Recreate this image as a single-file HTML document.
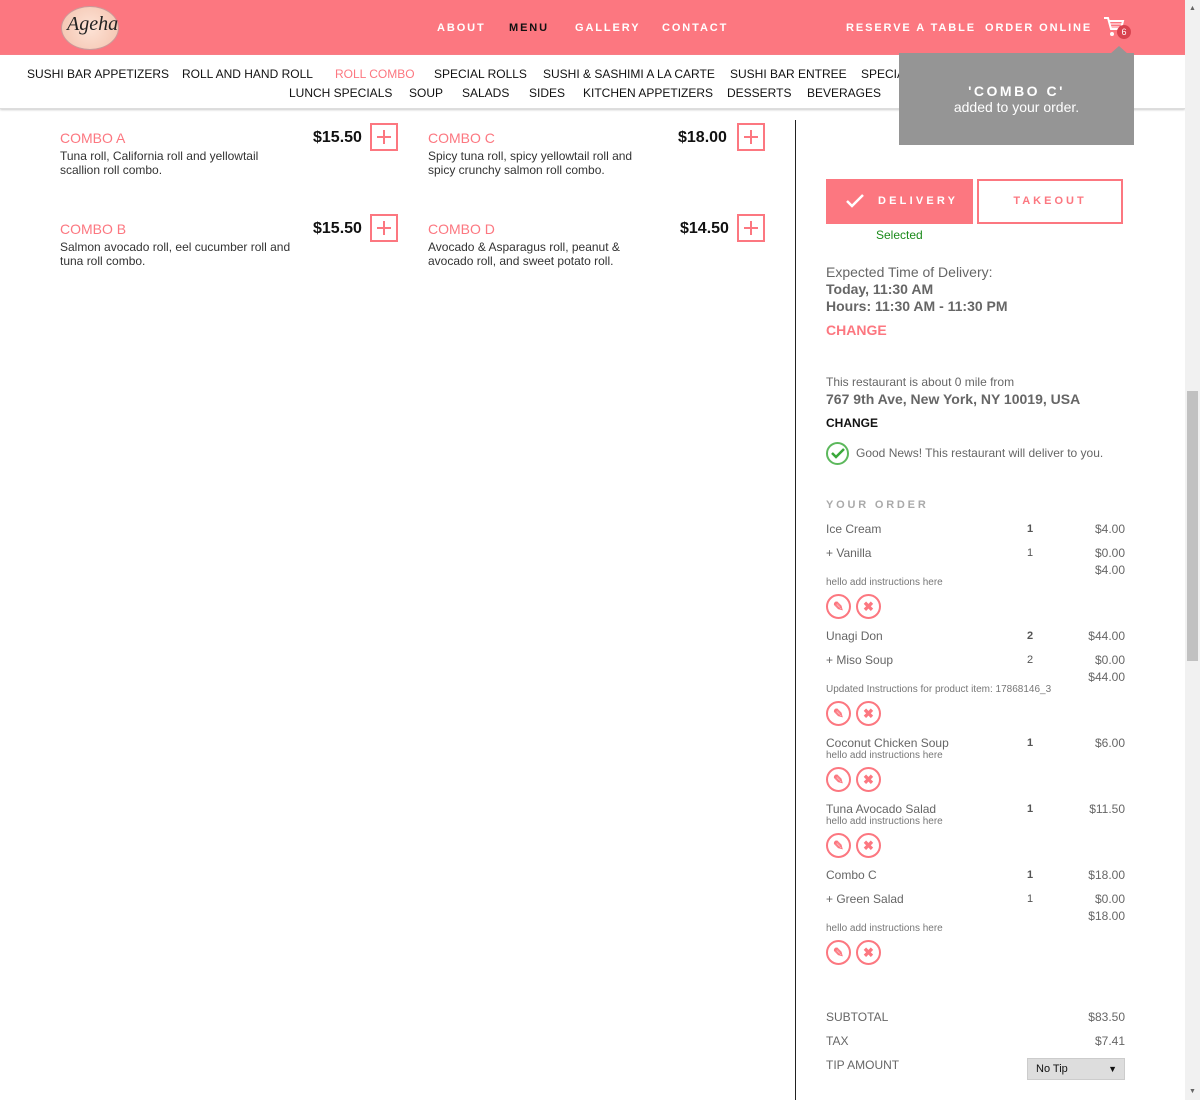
<!DOCTYPE html>
<html><head><meta charset="utf-8"><style>
*{margin:0;padding:0;box-sizing:border-box}
body{width:1200px;height:1100px;overflow:hidden;background:#fff;font-family:"Liberation Sans",sans-serif;position:relative;color:#222}
.a{position:absolute;white-space:nowrap}
.hdr{position:absolute;left:0;top:0;width:1185px;height:55px;background:#fc7780}
.nav{font-size:11px;letter-spacing:1.9px;color:#fff;font-weight:bold;top:22px}
.cat{font-size:12px;color:#111}
.pk{color:#fc7780}
.nm{font-size:14px;color:#fc7780}
.ds{font-size:12px;color:#333;line-height:14px;white-space:normal}
.pr{font-size:16px;font-weight:bold;color:#111}
.plus{position:absolute;width:28px;height:28px;border:2px solid #fc7780}
.plus:before{content:"";position:absolute;left:5px;top:11px;width:14px;height:2px;background:#fc7780}
.plus:after{content:"";position:absolute;left:11px;top:5px;width:2px;height:14px;background:#fc7780}
.g{color:#666}
.oi{font-size:12px;color:#666}
.q{font-size:11px;color:#555}
.ins{font-size:10px;color:#777}
.btn{position:absolute;width:25px;height:25px;border:2px solid #fc7780;border-radius:50%;color:#fc7780;font-size:13px;font-weight:bold;text-align:center;line-height:21px}
</style></head><body>
<div class="hdr"></div>
<div class="a" style="left:61px;top:6px;width:58px;height:44px;border-radius:50%;background:radial-gradient(circle,#fde3d6,#f3c2ad);border:1px solid #c99"></div>
<div class="a" style="left:67px;top:13px;font-family:'Liberation Serif',serif;font-style:italic;font-size:20px;color:#222">Ageha</div>
<div class="a nav" style="left:437px">ABOUT</div>
<div class="a nav" style="left:509px;color:#111">MENU</div>
<div class="a nav" style="left:575px">GALLERY</div>
<div class="a nav" style="left:662px">CONTACT</div>
<div class="a nav" style="left:846px">RESERVE A TABLE</div>
<div class="a nav" style="left:985px">ORDER ONLINE</div>
<svg class="a" style="left:1103px;top:16px" width="22" height="22" viewBox="0 0 22 22"><path d="M1 2h4l3 11h10l2-8H6" fill="none" stroke="#fff" stroke-width="2"/><path d="M7 8h12M8 11h10" stroke="#fff"/><circle cx="9" cy="18" r="2" fill="#fff"/><circle cx="17" cy="18" r="2" fill="#fff"/></svg>
<div class="a" style="left:1117px;top:25px;width:14px;height:14px;border-radius:50%;background:#d9434f;color:#fff;font-size:9px;text-align:center;line-height:14px">6</div>
<div class="a" style="left:0;top:55px;width:1185px;height:54px;border-bottom:1px solid #ddd;box-shadow:0 1px 2px #ccc"></div>
<div class="a cat" style="left:27px;top:67px">SUSHI BAR APPETIZERS</div>
<div class="a cat" style="left:182px;top:67px">ROLL AND HAND ROLL</div>
<div class="a cat pk" style="left:335px;top:67px">ROLL COMBO</div>
<div class="a cat" style="left:434px;top:67px">SPECIAL ROLLS</div>
<div class="a cat" style="left:543px;top:67px">SUSHI &amp; SASHIMI A LA CARTE</div>
<div class="a cat" style="left:730px;top:67px">SUSHI BAR ENTREE</div>
<div class="a cat" style="left:861px;top:67px">SPECIAL ORDERS SIDE ORDERS</div>
<div class="a cat" style="left:289px;top:86px">LUNCH SPECIALS</div>
<div class="a cat" style="left:409px;top:86px">SOUP</div>
<div class="a cat" style="left:462px;top:86px">SALADS</div>
<div class="a cat" style="left:529px;top:86px">SIDES</div>
<div class="a cat" style="left:583px;top:86px">KITCHEN APPETIZERS</div>
<div class="a cat" style="left:727px;top:86px">DESSERTS</div>
<div class="a cat" style="left:807px;top:86px">BEVERAGES</div>
<div class="a" style="left:1110px;top:46px;width:0;height:0;border-left:9px solid transparent;border-right:9px solid transparent;border-bottom:8px solid #959595"></div>
<div class="a" style="left:899px;top:53px;width:235px;height:92px;background:#959595;color:#fff;text-align:center">
<div style="margin-top:30px;font-size:14px;font-weight:bold;letter-spacing:2.5px">'COMBO C'</div>
<div style="font-size:14px">added to your order.</div></div>

<div class="a nm" style="left:60px;top:130px">COMBO A</div>
<div class="a ds" style="left:60px;top:149px;width:215px">Tuna roll, California roll and yellowtail scallion roll combo.</div>
<div class="a pr" style="left:313px;top:129px">$15.50</div><div class="plus" style="left:370px;top:123px"></div>
<div class="a nm" style="left:60px;top:221px">COMBO B</div>
<div class="a ds" style="left:60px;top:240px;width:248px">Salmon avocado roll, eel cucumber roll and tuna roll combo.</div>
<div class="a pr" style="left:313px;top:220px">$15.50</div><div class="plus" style="left:370px;top:214px"></div>
<div class="a nm" style="left:428px;top:130px">COMBO C</div>
<div class="a ds" style="left:428px;top:149px;width:222px">Spicy tuna roll, spicy yellowtail roll and spicy crunchy salmon roll combo.</div>
<div class="a pr" style="left:678px;top:129px">$18.00</div><div class="plus" style="left:737px;top:123px"></div>
<div class="a nm" style="left:428px;top:221px">COMBO D</div>
<div class="a ds" style="left:428px;top:240px;width:210px">Avocado &amp; Asparagus roll, peanut &amp; avocado roll, and sweet potato roll.</div>
<div class="a pr" style="left:680px;top:220px">$14.50</div><div class="plus" style="left:737px;top:214px"></div>

<div class="a" style="left:795px;top:120px;width:1px;height:980px;background:#222"></div>

<div class="a" style="left:826px;top:179px;width:147px;height:45px;background:#fc7780;color:#fff;font-size:11px;font-weight:bold;letter-spacing:3.2px;line-height:45px;padding-left:52px">DELIVERY</div>
<svg class="a" style="left:846px;top:194px" width="18" height="14"><path d="M1 7l5 5 11-11" fill="none" stroke="#fff" stroke-width="2.5"/></svg>
<div class="a" style="left:977px;top:179px;width:146px;height:45px;border:2px solid #fc7780;color:#fc7780;font-size:11px;font-weight:bold;letter-spacing:3px;line-height:41px;text-align:center">TAKEOUT</div>
<div class="a" style="left:876px;top:228px;font-size:12px;color:#1a8a1a">Selected</div>
<div class="a g" style="left:826px;top:264px;font-size:14px">Expected Time of Delivery:</div>
<div class="a g" style="left:826px;top:281px;font-size:14px;font-weight:bold">Today, 11:30 AM</div>
<div class="a g" style="left:826px;top:298px;font-size:14px;font-weight:bold">Hours: 11:30 AM - 11:30 PM</div>
<div class="a pk" style="left:826px;top:322px;font-size:14px;font-weight:bold">CHANGE</div>
<div class="a g" style="left:826px;top:375px;font-size:12px">This restaurant is about 0 mile from</div>
<div class="a g" style="left:826px;top:391px;font-size:14px;font-weight:bold">767 9th Ave, New York, NY 10019, USA</div>
<div class="a" style="left:826px;top:416px;font-size:12px;font-weight:bold;color:#111">CHANGE</div>
<div class="a" style="left:826px;top:442px;width:23px;height:23px;border:2px solid #5cb85c;border-radius:50%"></div>
<svg class="a" style="left:831px;top:448px" width="14" height="11"><path d="M1 5l4 4 8-8" fill="none" stroke="#3aa83a" stroke-width="2.5"/></svg>
<div class="a g" style="left:856px;top:446px;font-size:12px">Good News! This restaurant will deliver to you.</div>

<div class="a" style="left:826px;top:499px;font-size:11px;font-weight:bold;letter-spacing:2.8px;color:#aaa">YOUR ORDER</div>

<div class="a oi" style="left:826px;top:522px">Ice Cream</div><div class="a q" style="left:1027px;top:523px;font-weight:bold">1</div><div class="a oi" style="right:75px;top:522px">$4.00</div>
<div class="a oi" style="left:826px;top:546px">+ Vanilla</div><div class="a q" style="left:1027px;top:547px">1</div><div class="a oi" style="right:75px;top:546px">$0.00</div>
<div class="a oi" style="right:75px;top:563px">$4.00</div>
<div class="a ins" style="left:826px;top:577px">hello add instructions here</div>
<div class="btn" style="left:826px;top:594px">✎</div><div class="btn" style="left:856px;top:594px">✖</div>

<div class="a oi" style="left:826px;top:629px">Unagi Don</div><div class="a q" style="left:1027px;top:630px;font-weight:bold">2</div><div class="a oi" style="right:75px;top:629px">$44.00</div>
<div class="a oi" style="left:826px;top:653px">+ Miso Soup</div><div class="a q" style="left:1027px;top:654px">2</div><div class="a oi" style="right:75px;top:653px">$0.00</div>
<div class="a oi" style="right:75px;top:670px">$44.00</div>
<div class="a ins" style="left:826px;top:684px">Updated Instructions for product item: 17868146_3</div>
<div class="btn" style="left:826px;top:701px">✎</div><div class="btn" style="left:856px;top:701px">✖</div>

<div class="a oi" style="left:826px;top:736px">Coconut Chicken Soup</div><div class="a q" style="left:1027px;top:737px;font-weight:bold">1</div><div class="a oi" style="right:75px;top:736px">$6.00</div>
<div class="a ins" style="left:826px;top:750px">hello add instructions here</div>
<div class="btn" style="left:826px;top:767px">✎</div><div class="btn" style="left:856px;top:767px">✖</div>

<div class="a oi" style="left:826px;top:802px">Tuna Avocado Salad</div><div class="a q" style="left:1027px;top:803px;font-weight:bold">1</div><div class="a oi" style="right:75px;top:802px">$11.50</div>
<div class="a ins" style="left:826px;top:816px">hello add instructions here</div>
<div class="btn" style="left:826px;top:833px">✎</div><div class="btn" style="left:856px;top:833px">✖</div>

<div class="a oi" style="left:826px;top:868px">Combo C</div><div class="a q" style="left:1027px;top:869px;font-weight:bold">1</div><div class="a oi" style="right:75px;top:868px">$18.00</div>
<div class="a oi" style="left:826px;top:892px">+ Green Salad</div><div class="a q" style="left:1027px;top:893px">1</div><div class="a oi" style="right:75px;top:892px">$0.00</div>
<div class="a oi" style="right:75px;top:909px">$18.00</div>
<div class="a ins" style="left:826px;top:923px">hello add instructions here</div>
<div class="btn" style="left:826px;top:940px">✎</div><div class="btn" style="left:856px;top:940px">✖</div>

<div class="a oi" style="left:826px;top:1010px">SUBTOTAL</div><div class="a oi" style="right:75px;top:1010px">$83.50</div>
<div class="a oi" style="left:826px;top:1034px">TAX</div><div class="a oi" style="right:75px;top:1034px">$7.41</div>
<div class="a oi" style="left:826px;top:1058px">TIP AMOUNT</div>
<div class="a" style="left:1027px;top:1058px;width:98px;height:22px;background:#ddd;border:1px solid #ccc;font-size:11px;color:#111;line-height:20px;padding-left:8px">No Tip<span style="position:absolute;right:7px;font-size:9px">▼</span></div>

<div class="a" style="left:1185px;top:0;width:15px;height:1100px;background:#f1f1f1"></div>
<div class="a" style="left:1187px;top:391px;width:11px;height:270px;background:#c1c1c1"></div>
<div class="a" style="left:1189px;top:5px;font-size:7px;color:#666">▲</div>
<div class="a" style="left:1189px;top:1088px;font-size:7px;color:#666">▼</div>
</body></html>
